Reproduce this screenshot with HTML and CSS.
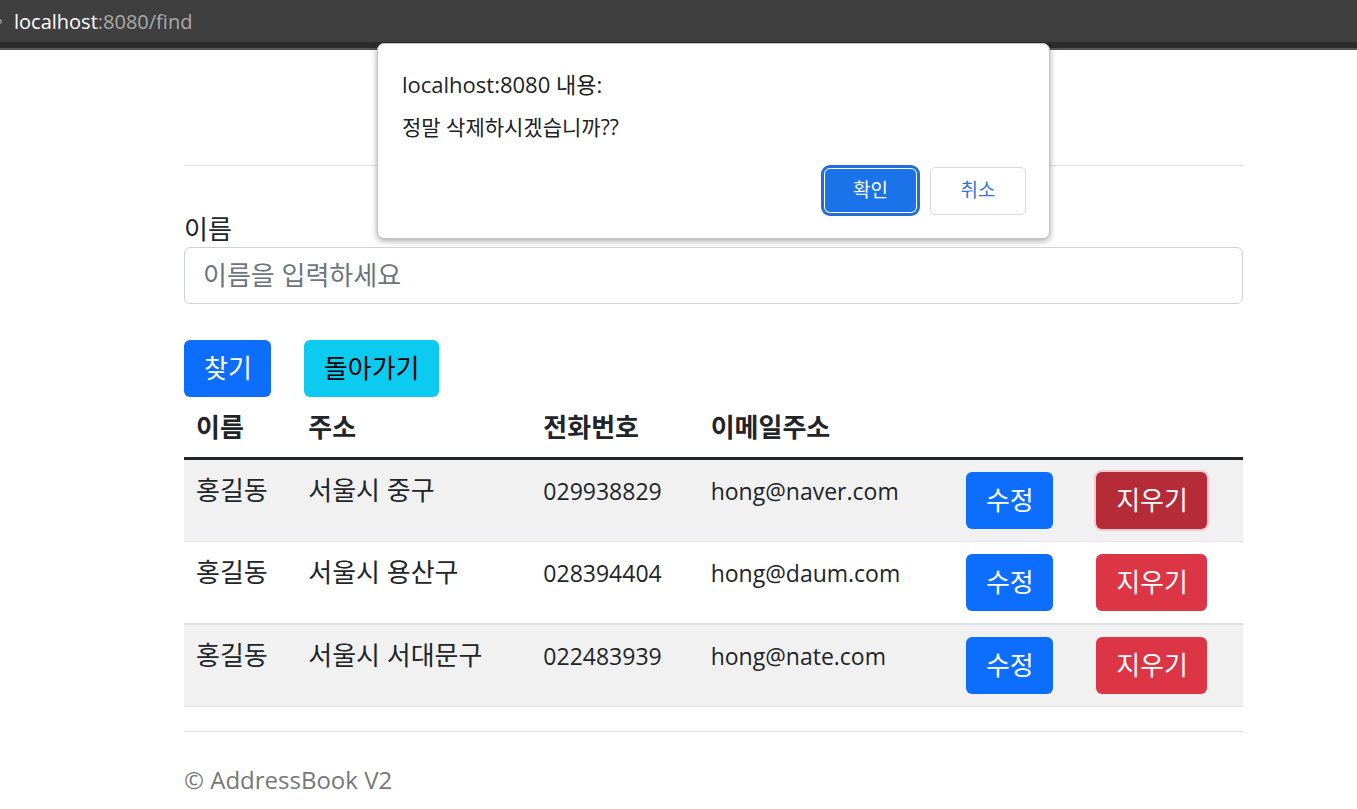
FILE: index.html
```html
<!DOCTYPE html>
<html lang="ko">
<head>
<meta charset="utf-8">
<title>AddressBook V2</title>
<link rel="stylesheet" href="styles.css">
</head>
<body>
<header class="address-bar">
  <span class="address-dot"></span>
  <span class="address"><span class="host">localhost</span>:8080/find</span>
</header>
<main class="container">
  <hr class="rule">
  <form class="search">
    <label class="label" for="name">이름</label>
    <input class="input" id="name" type="text" placeholder="이름을 입력하세요">
    <div class="actions">
      <button class="btn primary" type="submit">찾기</button>
      <a class="btn info" href="#">돌아가기</a>
    </div>
  </form>
  <table class="table">
    <colgroup>
      <col class="col-name"><col class="col-address"><col class="col-phone"><col class="col-email"><col class="col-edit"><col class="col-delete">
    </colgroup>
    <thead>
      <tr><th>이름</th><th>주소</th><th>전화번호</th><th>이메일주소</th><th></th><th></th></tr>
    </thead>
    <tbody>
      <tr>
        <td>홍길동</td><td>서울시 중구</td><td class="latin">029938829</td><td class="latin">hong@naver.com</td>
        <td><a class="btn primary" href="#">수정</a></td>
        <td><button class="btn danger pressed" type="button">지우기</button></td>
      </tr>
      <tr>
        <td>홍길동</td><td>서울시 용산구</td><td class="latin">028394404</td><td class="latin">hong@daum.com</td>
        <td><a class="btn primary" href="#">수정</a></td>
        <td><button class="btn danger" type="button">지우기</button></td>
      </tr>
      <tr>
        <td>홍길동</td><td>서울시 서대문구</td><td class="latin">022483939</td><td class="latin">hong@nate.com</td>
        <td><a class="btn primary" href="#">수정</a></td>
        <td><button class="btn danger" type="button">지우기</button></td>
      </tr>
    </tbody>
  </table>
  <footer class="footer">© AddressBook V2</footer>
</main>
<div class="dialog" role="alertdialog" aria-labelledby="dialog-title" aria-describedby="dialog-text">
  <h1 class="dialog-title" id="dialog-title">localhost:8080 내용:</h1>
  <p class="dialog-text" id="dialog-text">정말 삭제하시겠습니까??</p>
  <div class="dialog-actions">
    <button class="dialog-btn confirm" type="button">확인</button>
    <button class="dialog-btn cancel" type="button">취소</button>
  </div>
</div>
</body>
</html>
```
FILE: styles.css
```css
* {
  box-sizing: border-box;
}

body {
  margin: 0;
  background: #fff;
  color: #212529;
  font-family: "Open Sans", "Noto Sans CJK KR", sans-serif;
  font-size: 26px;
  line-height: 36px;
}

.address-bar {
  display: flex;
  align-items: center;
  gap: 12px;
  height: 50px;
  border-bottom: 2px solid #555;
  background: #3f3f3f;
  box-shadow: inset 0 -6px #2c2c2c;
  color: #aaa;
  font-size: 20px;
  line-height: 42px;
}

.address-dot {
  width: 2px;
  height: 5px;
  margin-bottom: 5px;
  border-radius: 0 3px 3px 0;
  background: #888;
}

.address {
  margin-bottom: 4px;
}

.host {
  color: #fff;
}

.container {
  padding: 115px 114px 0 184px;
}

.rule {
  margin: 0 0 45px;
  border: 0;
  border-top: 1px solid #dee0e2;
}

.search {
  display: flex;
  flex-direction: column;
}

.input {
  width: 100%;
  height: 57px;
  padding: 0 18px 1px;
  border: 1px solid #ced4da;
  border-radius: 6px;
  background: #fff;
  color: inherit;
  font: inherit;
}

.input::placeholder {
  color: #6c757d;
  opacity: 1;
}

.actions {
  display: flex;
  gap: 33px;
  margin-top: 36px;
}

.btn {
  display: block;
  width: max-content;
  padding: 10px 19px 11px 20px;
  border: 0;
  border-radius: 6px;
  color: #fff;
  font: inherit;
  text-decoration: none;
}

.primary {
  background: #0d6efd;
}

.info {
  background: #0dcaf0;
  color: #000;
}

.danger {
  background: #dc3545;
}

.pressed {
  background: #b52b38;
  box-shadow: 0 0 0 2px #f0c8cc;
}

.table {
  width: 100%;
  table-layout: fixed;
  border-collapse: separate;
  border-spacing: 0;
}

.col-name { width: 10.6%; }
.col-address { width: 22.2%; }
.col-phone { width: 15.8%; }
.col-email { width: 24.1%; }
.col-edit { width: 12.3%; }
.col-delete { width: 15%; }

.table th,
.table td {
  padding: 12px;
  border-bottom: 1px solid #dee2e6;
  text-align: left;
  vertical-align: top;
  white-space: nowrap;
}

.table th {
  border-bottom: 3px solid #212529;
  font-weight: 700;
}

.table tbody tr:nth-child(odd) {
  background: #f1f1f2;
}

.table tbody tr:nth-child(2) td {
  border-bottom-width: 2px;
}

.table .latin {
  font-size: 23px;
  line-height: 38px;
}

.footer {
  margin-top: 24px;
  padding-top: 30px;
  border-top: 1px solid #dee0e2;
  color: #777;
  font-size: 24px;
}

.dialog {
  position: absolute;
  top: 43px;
  left: 377px;
  width: 673px;
  padding: 23px 23px 23px 24px;
  border: 1px solid #c4c4c4;
  border-radius: 7px;
  background: #fff;
  box-shadow: 0 2px 6px rgba(0, 0, 0, 0.35);
  color: #202124;
}

.dialog-title {
  margin: 0;
  font-size: 22px;
  font-weight: 400;
  line-height: 34px;
}

.dialog-text {
  margin: 10px 0 0;
  font-size: 21px;
  line-height: 32px;
}

.dialog-actions {
  display: flex;
  justify-content: flex-end;
  gap: 14px;
  margin-top: 24px;
}

.dialog-btn {
  width: 96px;
  height: 48px;
  padding: 0 0 2px;
  border: 1px solid #dadce0;
  border-radius: 5px;
  background: #fff;
  color: #3673d8;
  font: inherit;
  font-size: 19px;
}

.confirm {
  width: 91px;
  height: 43px;
  margin: 2px 0;
  border: 0;
  background: #1a73e8;
  box-shadow: 0 0 0 1px #fff, 0 0 0 4px #236ed5;
  color: #fff;
}
```
